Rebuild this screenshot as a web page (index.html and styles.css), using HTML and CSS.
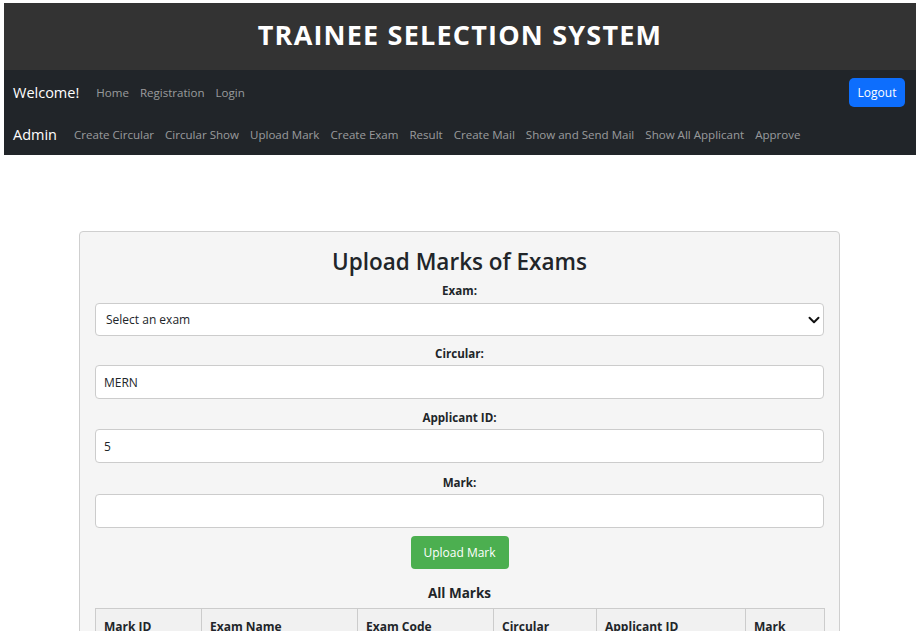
FILE: index.html
```html
<!DOCTYPE html>
<html lang="en">
<head>
<meta charset="utf-8">
<title>Trainee Selection System</title>
<link rel="stylesheet" href="styles.css">
</head>
<body>
<div class="page">
  <header class="site-header">
    <h1 class="site-title">TRAINEE SELECTION SYSTEM</h1>
  </header>
  <nav class="navbar">
    <div class="nav-row">
      <span class="brand">Welcome!</span>
      <ul class="nav-links">
        <li><a href="#">Home</a></li>
        <li><a href="#">Registration</a></li>
        <li><a href="#">Login</a></li>
      </ul>
      <button class="btn-logout" type="button">Logout</button>
    </div>
    <div class="nav-row">
      <span class="brand">Admin</span>
      <ul class="nav-links admin-links">
        <li><a href="#">Create Circular</a></li>
        <li><a href="#">Circular Show</a></li>
        <li><a href="#">Upload Mark</a></li>
        <li><a href="#">Create Exam</a></li>
        <li><a href="#">Result</a></li>
        <li><a href="#">Create Mail</a></li>
        <li><a href="#">Show and Send Mail</a></li>
        <li><a href="#">Show All Applicant</a></li>
        <li><a href="#">Approve</a></li>
      </ul>
    </div>
  </nav>

  <main class="content">
    <section class="card">
      <h2 class="card-title">Upload Marks of Exams</h2>
      <form class="mark-form">
        <label class="field-label">Exam:</label>
        <div class="select-wrap">
          <select class="field-input field-select">
            <option>Select an exam</option>
          </select>
          <svg class="select-arrow" width="12" height="12" viewBox="0 0 16 16"><path d="M2 5l6 6 6-6" fill="none" stroke="#111" stroke-width="2.6" stroke-linecap="round" stroke-linejoin="round"/></svg>
        </div>
        <label class="field-label">Circular:</label>
        <input class="field-input" type="text" value="MERN">
        <label class="field-label tight">Applicant ID:</label>
        <input class="field-input" type="text" value="5">
        <label class="field-label">Mark:</label>
        <input class="field-input" type="text" value="">
        <div class="btn-row">
          <button class="btn-upload" type="button">Upload Mark</button>
        </div>
      </form>
      <h3 class="table-title">All Marks</h3>
      <table class="marks-table">
        <thead>
          <tr>
            <th class="c1">Mark ID</th>
            <th class="c2">Exam Name</th>
            <th class="c3">Exam Code</th>
            <th class="c4">Circular</th>
            <th class="c5">Applicant ID</th>
            <th class="c6">Mark</th>
          </tr>
        </thead>
      </table>
    </section>
  </main>
</div>
</body>
</html>
```

FILE: styles.css
```css
* { box-sizing: border-box; }
html, body { margin: 0; padding: 0; background: #fff; }
body {
  font-family: "Open Sans", "Noto Sans", sans-serif;
  color: #212529;
  overflow: hidden;
}
.page { padding: 3px 7px 0 4px; }

.site-header {
  background: #333333;
  height: 67px;
  display: flex;
  align-items: center;
  justify-content: center;
  padding-bottom: 4px;
}
.site-title {
  margin: 0;
  color: #fff;
  font-size: 27px;
  font-weight: 700;
  letter-spacing: 1.2px;
  line-height: 1;
}

.navbar { background: #212529; }
.nav-row {
  height: 42px;
  display: flex;
  align-items: center;
  padding: 0 11px 0 9px;
}
.nav-row:first-child { height: 43px; padding-top: 2px; }
.brand {
  color: #fff;
  font-size: 14.5px;
  margin-right: 11.5px;
}
.nav-links {
  list-style: none;
  margin: 0;
  padding: 0;
  display: flex;
}
.nav-links a {
  display: block;
  padding: 0 5.5px;
  color: rgba(255,255,255,0.55);
  text-decoration: none;
  font-size: 11.55px;
}
.btn-logout {
  margin-left: auto;
  background: #0d6efd;
  color: #fff;
  border: 0;
  border-radius: 5px;
  width: 56px;
  height: 29px;
  font-family: inherit;
  font-size: 12px;
  padding: 0;
}

.content { padding: 76px 0 0 75px; }
.card {
  width: 761px;
  background: #f5f5f5;
  border: 1px solid #cfcfcf;
  border-radius: 4px;
  padding: 16px 15px 0 15px;
  height: 420px;
}
.card-title {
  margin: 0;
  text-align: center;
  font-size: 22.5px;
  font-weight: 600;
  line-height: 28px;
}
.mark-form { display: flex; flex-direction: column; }
.field-label {
  display: block;
  text-align: center;
  font-weight: 700;
  font-size: 11.6px;
  line-height: 18px;
  margin: 11px 0 2px;
}
.field-label.tight { margin-top: 10px; }
.field-label:first-child { margin-top: 6px; margin-bottom: 3px; }
.field-input {
  display: block;
  width: 100%;
  height: 34px;
  background: #fff;
  border: 1px solid #cccccc;
  border-radius: 4px;
  padding: 0 8px;
  font-family: inherit;
  font-size: 12px;
  color: #212529;
}
.select-wrap { position: relative; margin-bottom: -2px; }
.field-select {
  height: 33px;
  appearance: none;
  -webkit-appearance: none;
  padding-left: 10px;
}
.select-arrow {
  position: absolute;
  right: 4px;
  top: 11px;
}
.btn-row {
  display: flex;
  justify-content: center;
  margin-top: 8px;
}
.btn-upload {
  background: #4caf50;
  color: #fff;
  border: 0;
  border-radius: 4px;
  width: 98px;
  height: 33px;
  font-family: inherit;
  font-size: 12px;
  padding: 0;
}
.table-title {
  margin: 14px 0 5px;
  text-align: center;
  font-size: 13.5px;
  font-weight: 700;
  line-height: 20px;
}
.marks-table {
  width: 729px;
  border-collapse: collapse;
  table-layout: fixed;
}
.marks-table th {
  background: #f1f1f1;
  border: 1px solid #cccccc;
  text-align: left;
  font-size: 12px;
  font-weight: 700;
  padding: 9px 8px 8px;
  line-height: 18px;
  height: 40px;
  vertical-align: top;
}
.c1 { width: 106px; }
.c2 { width: 156px; }
.c3 { width: 136px; }
.c4 { width: 103px; }
.c5 { width: 149px; }
.c6 { width: 79px; }
```
